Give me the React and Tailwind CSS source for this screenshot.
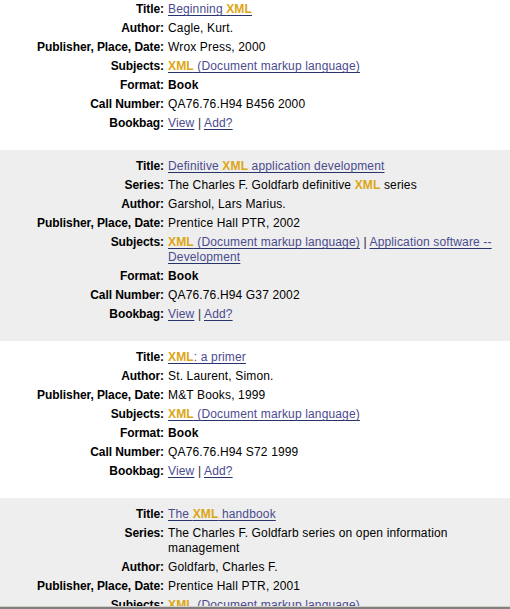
import React from 'react';

const records = [
  {
    title: 'Beginning XML',
    author: 'Cagle, Kurt.',
    pub: 'Wrox Press, 2000',
    subjects: ['XML (Document markup language)'],
    call: 'QA76.76.H94 B456 2000',
  },
  {
    title: 'Definitive XML application development',
    series: 'The Charles F. Goldfarb definitive XML series',
    author: 'Garshol, Lars Marius.',
    pub: 'Prentice Hall PTR, 2002',
    subjects: ['XML (Document markup language)', 'Application software -- Development'],
    call: 'QA76.76.H94 G37 2002',
  },
  {
    title: 'XML: a primer',
    author: 'St. Laurent, Simon.',
    pub: 'M&T Books, 1999',
    subjects: ['XML (Document markup language)'],
    call: 'QA76.76.H94 S72 1999',
  },
  {
    title: 'The XML handbook',
    series: 'The Charles F. Goldfarb series on open information management',
    author: 'Goldfarb, Charles F.',
    pub: 'Prentice Hall PTR, 2001',
    subjects: ['XML (Document markup language)'],
    call: 'QA76.76.H94 G65 2001',
  },
];

// wrap every "XML" in the search-term highlight
function hl(text) {
  const parts = text.split('XML');
  return parts.map((p, i) => (
    <React.Fragment key={i}>
      {p}
      {i < parts.length - 1 && <span className="font-bold text-[#dca613]">XML</span>}
    </React.Fragment>
  ));
}

function A({ children }) {
  return (
    <a href="#" className="text-[#4b4b8f] underline decoration-[#27336a] underline-offset-[2px]">
      {children}
    </a>
  );
}

function Row({ label, children }) {
  return (
    <>
      <div className="py-[2px] pr-[2px] text-right font-bold tracking-[-0.08px]">{label}:</div>
      <div className="py-[2px] px-[2px] tracking-[0.15px]">{children}</div>
    </>
  );
}

function Record({ rec, shaded }) {
  return (
    <div className={`pt-[7px] pb-[17px] pr-[12px] ${shaded ? 'bg-[#eeeeee]' : 'bg-white'}`}>
      <div className="grid grid-cols-[166px_1fr]">
        <Row label="Title">
          <A>{hl(rec.title)}</A>
        </Row>
        {rec.series && <Row label="Series">{hl(rec.series)}</Row>}
        <Row label="Author">{rec.author}</Row>
        <Row label="Publisher, Place, Date">{rec.pub}</Row>
        <Row label="Subjects">
          {rec.subjects.map((s, i) => (
            <React.Fragment key={s}>
              {i > 0 && <span className="text-[#2a1a33]"> | </span>}
              <A>{hl(s)}</A>
            </React.Fragment>
          ))}
        </Row>
        <Row label="Format">
          <span className="font-bold">Book</span>
        </Row>
        <Row label="Call Number">{rec.call}</Row>
        <Row label="Bookbag">
          <A>View</A>
          <span className="text-[#2a1a33]"> | </span>
          <A>Add?</A>
        </Row>
      </div>
    </div>
  );
}

export default function App() {
  return (
    <div className="h-[609px] overflow-hidden bg-white font-['Liberation_Sans',Arial,sans-serif] text-[12px] leading-[15px] text-black">
      <div className="-mt-[7px]">
        {records.map((rec, i) => (
          <Record key={i} rec={rec} shaded={i % 2 === 1} />
        ))}
      </div>
      {/* window frame edge at the bottom */}
      <div className="fixed bottom-0 left-0 right-0 h-[3px] border-t border-[#d4d0c8] bg-[#808080]" />
    </div>
  );
}
